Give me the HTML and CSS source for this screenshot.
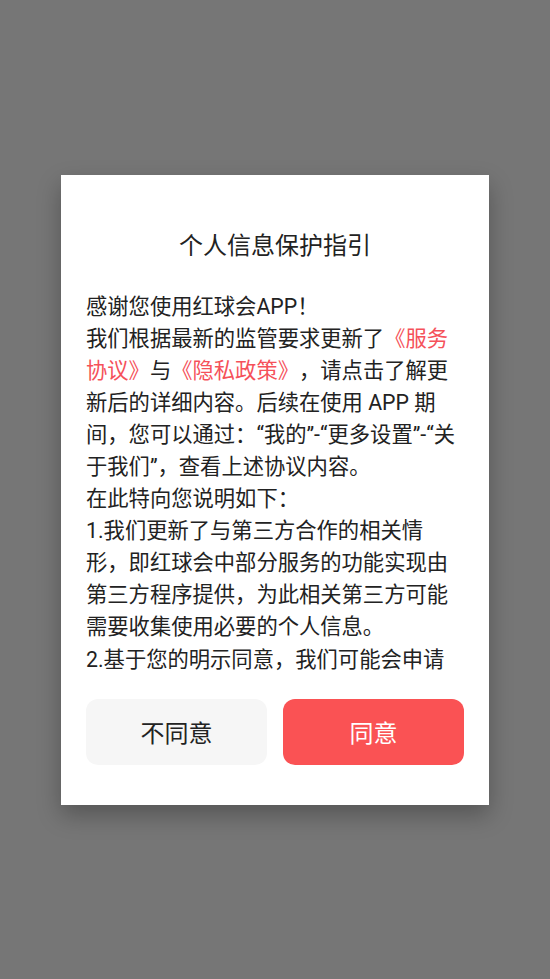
FILE: index.html
```html
<!DOCTYPE html>
<html lang="zh-CN">
<head>
<meta charset="utf-8">
<title>个人信息保护指引</title>
<link rel="stylesheet" href="styles.css">
</head>
<body>
<div class="overlay">
  <div class="dialog">
    <h1 class="title">个人信息保护指引</h1>
    <div class="body">
      <p>感谢您使用红球会APP！</p>
      <p>我们根据最新的监管要求更新了<span class="link">《服务协议》</span>与<span class="link">《隐私政策》</span>，请点击了解更新后的详细内容。后续在使用 APP 期间，您可以通过：“我的”-“更多设置”-“关于我们”，查看上述协议内容。</p>
      <p>在此特向您说明如下：</p>
      <p>1.我们更新了与第三方合作的相关情形，即红球会中部分服务的功能实现由第三方程序提供，为此相关第三方可能需要收集使用必要的个人信息。</p>
      <p>2.基于您的明示同意，我们可能会申请获取您的设备信息、存储权限等，用于保障您的账号安全及正常使用相关功能。</p>
    </div>
    <div class="actions">
      <button class="btn btn-cancel">不同意</button>
      <button class="btn btn-ok">同意</button>
    </div>
  </div>
</div>
</body>
</html>
```

FILE: styles.css
```css
* { box-sizing: border-box; }
html, body {
  margin: 0;
  padding: 0;
  height: 100%;
}
body {
  background: #767676;
  font-family: Roboto, "Noto Sans CJK SC", sans-serif;
  color: #222;
  text-spacing-trim: space-all;
}
.overlay {
  height: 100%;
  display: flex;
  align-items: center;
  justify-content: center;
}
.dialog {
  width: 428px;
  height: 630px;
  background: #fff;
  padding: 55px 25px 40px;
  display: flex;
  flex-direction: column;
  box-shadow: 0 10px 22px rgba(0, 0, 0, 0.28);
}
.title {
  margin: 0;
  font-size: 24px;
  line-height: 32px;
  font-weight: normal;
  text-align: center;
  color: #222;
}
.body {
  margin-top: 29px;
  height: 384px;
  overflow: hidden;
  font-size: 21.3px;
  line-height: 32.1px;
  text-spacing-trim: space-all;
}
.body p {
  margin: 0;
}
.link {
  color: #f5515a;
}
.actions {
  margin-top: 24px;
  display: flex;
  gap: 16px;
}
.btn {
  flex: 1;
  height: 66px;
  border: none;
  border-radius: 12px;
  font-family: Roboto, "Noto Sans CJK SC", sans-serif;
  font-size: 24px;
  padding: 0;
}
.btn-cancel {
  background: #f6f6f6;
  color: #222;
}
.btn-ok {
  background: #fa5254;
  color: #fff;
}
```
